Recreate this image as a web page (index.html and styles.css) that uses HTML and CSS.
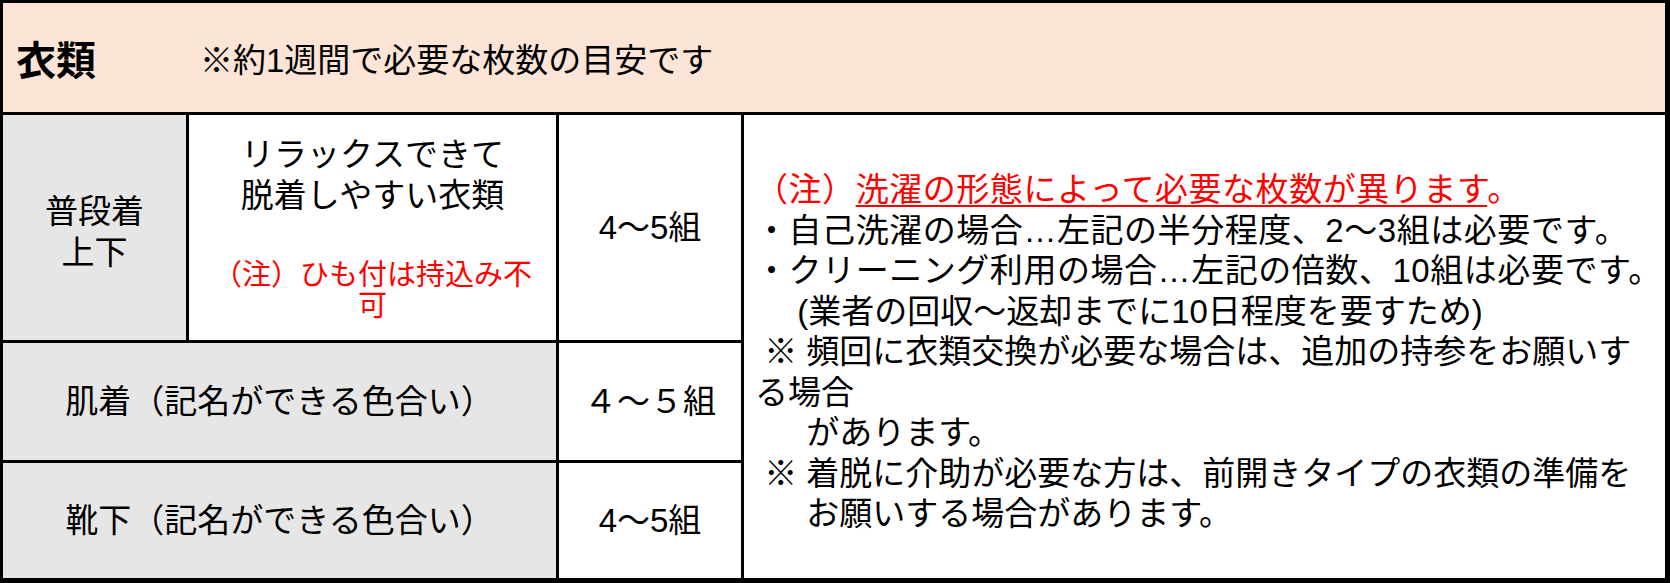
FILE: index.html
```html
<!DOCTYPE html>
<html lang="ja">
<head>
<meta charset="utf-8">
<title>衣類</title>
<link rel="stylesheet" href="styles.css">
</head>
<body>
<div class="sheet">
  <div class="head">
    <span class="title">衣類</span>
    <span class="note">※約1週間で必要な枚数の目安です</span>
  </div>

  <div class="cell grey kind">普段着<br>上下</div>
  <div class="cell desc">
    <div class="desc-main">リラックスできて<br>脱着しやすい衣類</div>
    <div class="desc-warn">（注）ひも付は持込み不<br>可</div>
  </div>
  <div class="cell qty">4〜5組</div>

  <div class="cell notes">
    <div class="line wide red">（注）<span class="ul">洗濯の形態によって必要な枚数が異ります</span>。</div>
    <div class="line wide">・自己洗濯の場合…左記の半分程度、2〜3組は必要です。</div>
    <div class="line wide">・クリーニング利用の場合…左記の倍数、10組は必要です。</div>
    <div class="line">　 (業者の回収〜返却までに10日程度を要すため)</div>
    <div class="line"> ※ 頻回に衣類交換が必要な場合は、追加の持参をお願いす</div>
    <div class="line">る場合</div>
    <div class="line">　  があります。</div>
    <div class="line"> ※ 着脱に介助が必要な方は、前開きタイプの衣類の準備を</div>
    <div class="line">　  お願いする場合があります。</div>
  </div>

  <div class="cell grey label">肌着（記名ができる色合い）</div>
  <div class="cell qty">４～５組</div>

  <div class="cell grey label">靴下（記名ができる色合い）</div>
  <div class="cell qty">4〜5組</div>
</div>
</body>
</html>
```

FILE: styles.css
```css
html, body {
  margin: 0;
  padding: 0;
  background: #ffffff;
}

body {
  font-family: "Liberation Sans", "Noto Sans CJK JP", sans-serif;
  color: #000000;
}

.sheet {
  box-sizing: border-box;
  width: 1670px;
  height: 583px;
  background: #000000;
  padding: 3px 5px 5px 3px;
  display: grid;
  grid-template-columns: 183px 367px 182px 921px;
  grid-template-rows: 109px 225px 117px 115px;
  gap: 3px;
}

.head {
  grid-column: 1 / 5;
  background: #fce4d6;
  display: flex;
  align-items: center;
  padding: 6px 0 0 13px;
  box-sizing: border-box;
}

.title {
  width: 184px;
  font-size: 40px;
  font-weight: bold;
  line-height: 1;
}

.note {
  font-size: 33px;
  line-height: 1;
}

.cell {
  background: #ffffff;
  font-size: 33px;
  line-height: 41px;
  box-sizing: border-box;
}

.grey {
  background: #e7e6e6;
}

.kind {
  display: flex;
  align-items: center;
  justify-content: center;
  text-align: center;
  padding-top: 8px;
}

.desc {
  display: flex;
  flex-direction: column;
  justify-content: center;
  align-items: center;
  text-align: center;
}

.desc-warn {
  margin-top: 44px;
  color: #ff0000;
  font-size: 29px;
  line-height: 31px;
}

.qty {
  display: flex;
  align-items: center;
  justify-content: center;
}

.label {
  grid-column: 1 / 3;
  display: flex;
  align-items: center;
  justify-content: center;
}

.notes {
  grid-column: 4;
  grid-row: 2 / 5;
  padding: 55px 0 0 11px;
}

.line {
  white-space: pre;
  line-height: 40.5px;
}

.wide {
  letter-spacing: 0.55px;
}

.red {
  color: #ff0000;
}

.ul {
  text-decoration: underline;
  text-decoration-thickness: 2px;
  text-underline-offset: 4px;
}
```
